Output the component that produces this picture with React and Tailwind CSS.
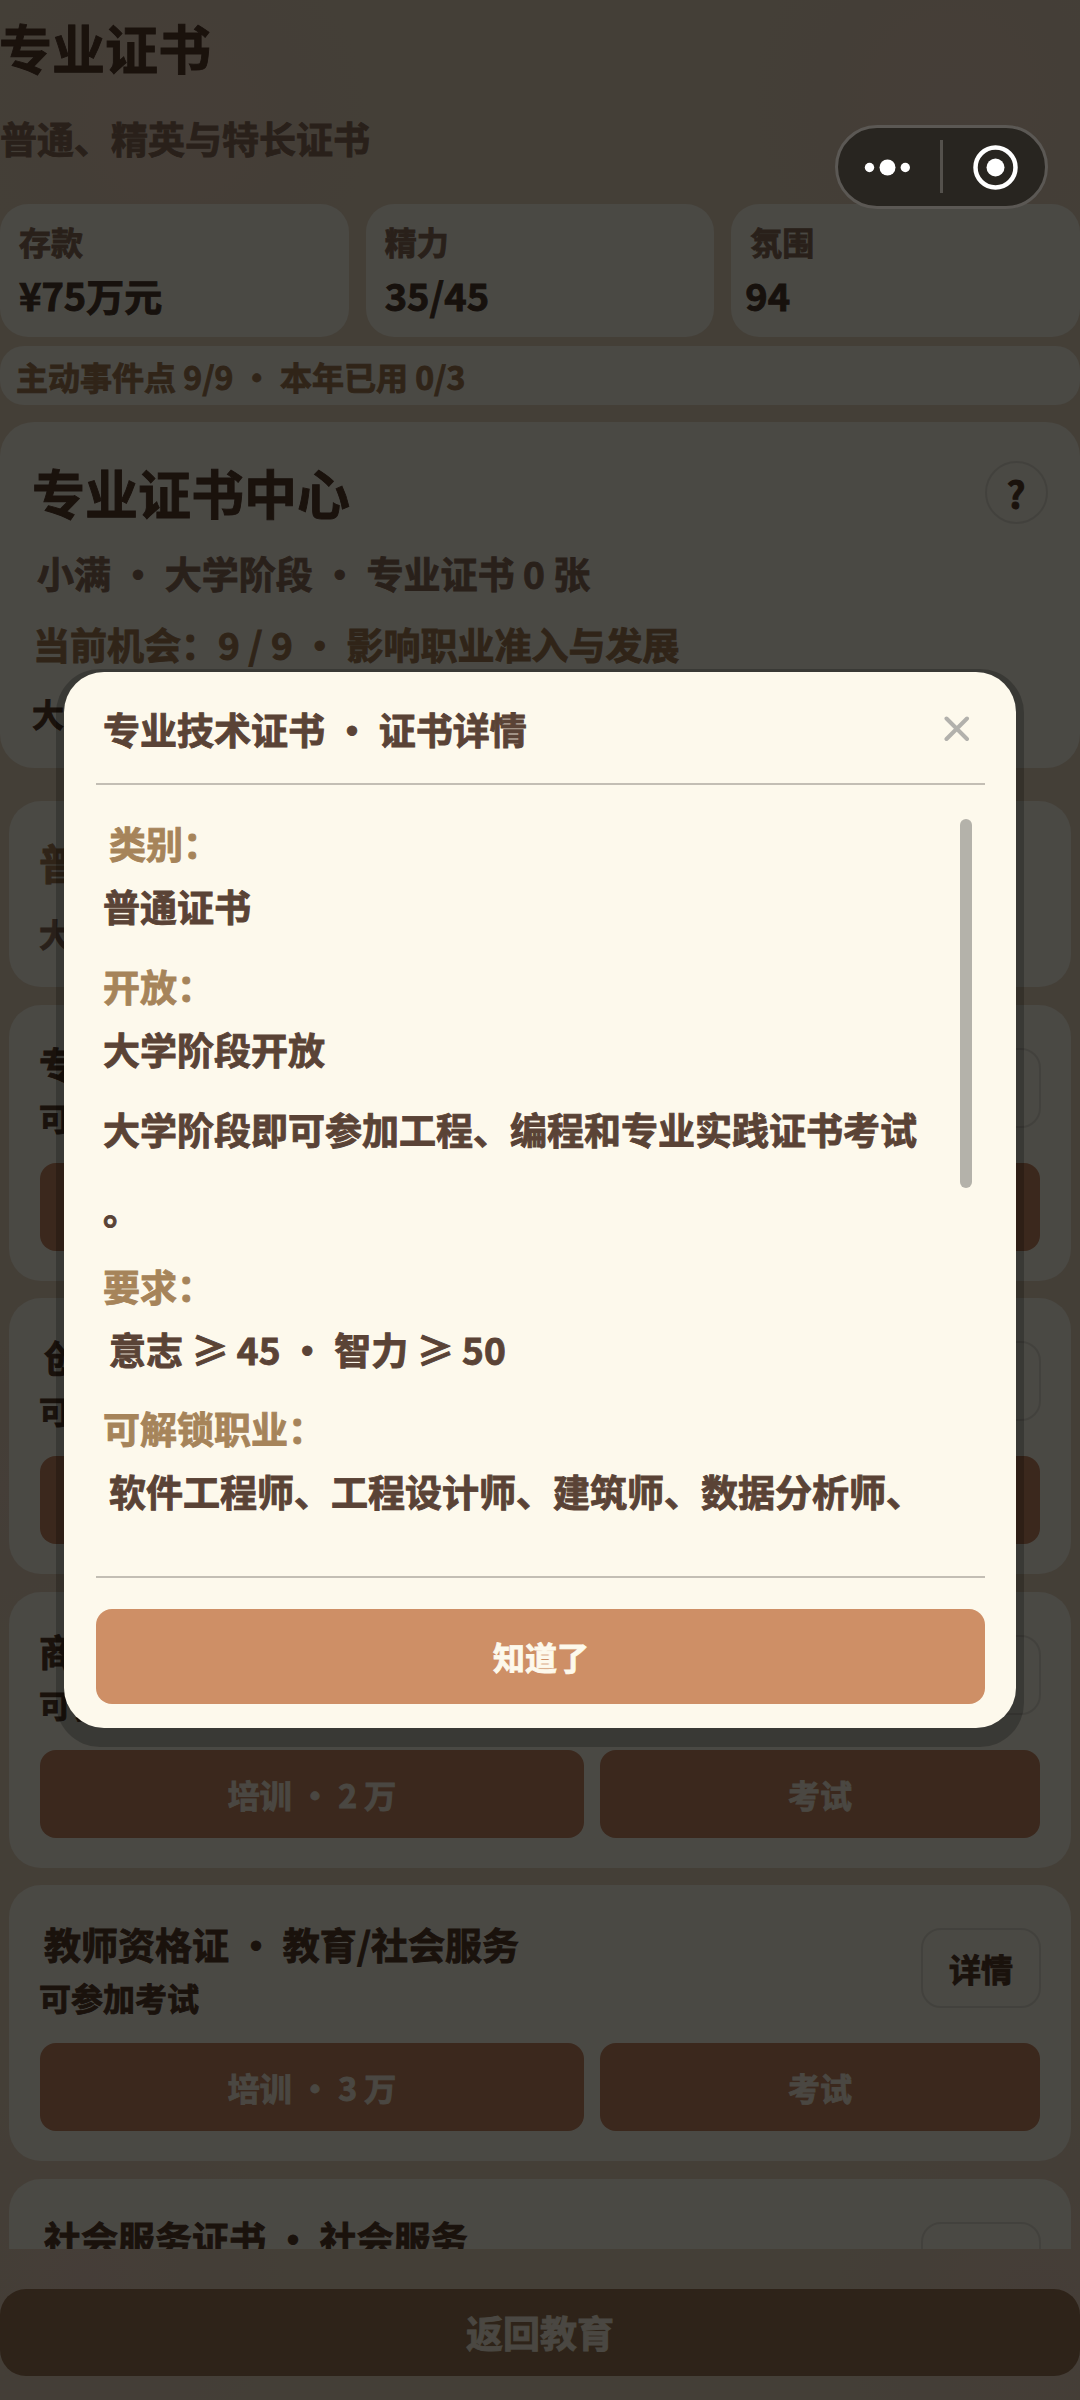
import React from 'react';

const certificates = [
    { title: '专业技术证书 · 专业技术', status: '可参加考试', cost: 3, action: '详情' },
    { title: '创业管理证书 · 创业/管理', status: '可参加考试', cost: 3, action: '详情', indent: true },
    { title: '商务管理证书 · 商务', status: '可参加考试', cost: 2, action: '详情' },
    { title: '教师资格证 · 教育/社会服务', status: '可参加考试', cost: 3, action: '详情', indent: true },
    { title: '社会服务证书 · 社会服务', status: '可参加考试', cost: 2, indent: true },
];

const stats = [
    { label: '存款', value: '¥75万元' },
    { label: '精力', value: '35/45' },
    { label: '氛围', value: '94', shift: true },
];

const CertificateCard = ({ title, status, cost, action, indent }) => (
    <div className="h-[276px] shrink-0 rounded-[32px] bg-[#f7f3e3] px-[31px] pt-[29px]">
        <div className="flex justify-between">
            <div>
                <h3 className={`text-[37px] leading-[60px] ${indent ? 'pl-[4px]' : '-ml-px'}`}>{title}</h3>
                <p className="-ml-px text-[32px] leading-[46px]">{status}</p>
            </div>
            <button className="-mr-px mt-[14px] h-[80px] w-[120px] rounded-[20px] border-2 border-[#dedbcb] text-[32px] font-bold">
                {action}
            </button>
        </div>
        <div className="mt-[23px] flex gap-4 text-[32px] text-[#f7efdc]">
            <button className="h-[88px] w-[544px] rounded-[16px] bg-[#c58561] font-bold">培训 · {cost} 万</button>
            <button className="h-[88px] flex-1 rounded-[16px] bg-[#c58561] font-bold">考试</button>
        </div>
    </div>
);

const Detail = ({ label, children, className = '', labelClass = '', valueClass = '' }) => (
    <div className={`leading-[62px] ${className}`}>
        <div className={`text-[#a6845a] ${labelClass}`}>{label}：</div>
        <div className={`mt-px whitespace-nowrap ${valueClass}`}>{children}</div>
    </div>
);

const DetailDialog = () => (
    <div className="absolute left-[56px] top-[669px] w-[968px] rounded-[44px] bg-black/22 px-2 pb-[19px] pt-[3px]">
        <div className="flex h-[1056px] flex-col rounded-[40px] bg-[#fdf9ec] px-[31.500px] text-[37px] text-[#5a4336]">
            <div className="flex h-[113px] items-center justify-between border-b-2 border-[#c3beb4] pl-[7.500px] pr-[15px]">
                <h2 className="pt-[4px]">专业技术证书 · 证书详情</h2>
                <svg className="mt-[2px]" width="26" height="26" viewBox="0 0 26 26" fill="none" stroke="#b2b1ac" strokeWidth="4" strokeLinecap="round">
                    <path d="M2.500 2.500L23 23M23 2.500L2.500 23" />
                </svg>
            </div>

            <div className="relative h-[791px] overflow-hidden pl-[7.500px] pt-[27px]">
                <Detail label="类别" labelClass="pl-[6px]">普通证书</Detail>
                <Detail label="开放" className="mt-[18px]">大学阶段开放</Detail>
                <p className="mt-[9px] w-[820px] leading-[80px] [line-break:anywhere]">
                    大学阶段即可参加工程、编程和专业实践证书考试。
                </p>
                <Detail label="要求" className="mt-[6px]" valueClass="pl-[6px]">意志 ≥ 45 · 智力 ≥ 50</Detail>
                <Detail label="可解锁职业" className="mt-[17px]" valueClass="pl-[6px]">
                    软件工程师、工程设计师、建筑师、数据分析师、
                </Detail>
                <div className="absolute right-[12.500px] top-[34px] h-[369px] w-[12px] rounded-full bg-[#b4b2aa]"></div>
            </div>

            <div className="border-t-2 border-[#c3beb4] pt-[31px]">
                <button className="h-[95px] w-full rounded-[16px] bg-[#ce8f66] pb-[2px] pl-[2px] text-[32px] font-bold text-[#fdf9ec]">
                    知道了
                </button>
            </div>
        </div>
    </div>
);

// Mini program menu capsule
const Capsule = () => (
    <div className="absolute left-[835px] top-[125px] flex h-[84px] w-[213px] items-center rounded-full border-[3px] border-[#5b5854] bg-[#282520]">
        <svg width="207" height="78" viewBox="0 0 207 78" fill="#fff">
            <circle cx="31.500" cy="39.500" r="4.700" />
            <circle cx="49.500" cy="39.500" r="8" />
            <circle cx="67.300" cy="39.500" r="4.700" />
            <rect x="102" y="12" width="3" height="53" fill="#54514c" />
            <circle cx="157.500" cy="39.500" r="20" fill="none" stroke="#fff" strokeWidth="4.500" />
            <circle cx="157.500" cy="39.500" r="9" />
        </svg>
    </div>
);

const App = () => {
    return (
        <div className="relative flex h-[2400px] w-[1080px] flex-col overflow-hidden bg-[#e3d2b9] font-['Noto_Sans_CJK_SC',sans-serif] font-bold text-[#573c2b] [-webkit-text-stroke:0.9px]">
            {/* Warm blotches of the paper backdrop */}
            <div className="absolute inset-0 bg-[radial-gradient(circle_at_16%_5%,#e8cfbb_0,transparent_8%),radial-gradient(circle_at_88%_4%,#e8cfbb_0,transparent_8%),radial-gradient(circle_at_0%_62%,#e6cfbb_0,transparent_8%),radial-gradient(circle_at_96%_96%,#e8cebb_0,transparent_8%),radial-gradient(circle_at_8%_95%,#e7cebb_0,transparent_8%)]"></div>

            <div className="relative flex min-h-0 flex-1 flex-col overflow-hidden">
                <h1 className="-ml-px text-[53px] leading-[94px]">专业证书</h1>
                <p className="text-[37px] leading-[88px] text-[#8a6d58]">普通、精英与特长证书</p>

                <div className="mt-[22px] flex shrink-0 gap-[17px]">
                    {stats.map((s) => (
                        <div key={s.label} className="h-[133px] flex-1 rounded-[28px] bg-[#f7f3e3] pl-[19px] pt-[10px]">
                            <div className="text-[32px] leading-[54px] text-[#8a6d58]">{s.label}</div>
                            <div className={`text-[38px] leading-[54px] text-[#4d3a2c] ${s.shift ? '-ml-[5px]' : ''}`}>{s.value}</div>
                        </div>
                    ))}
                </div>

                <div className="mt-[9px] h-[59px] shrink-0 rounded-[24px] bg-[#f7f3e3] pl-[16px] text-[32px] leading-[60px] text-[#a07a52]">
                    主动事件点 9/9 · 本年已用 0/3
                </div>

                <div className="mt-[17px] h-[346px] shrink-0 rounded-[34px] bg-[#f7f3e3] pl-[32px] pr-[32px] pt-[32px]">
                    <div className="flex justify-between">
                        <h2 className="text-[53px] leading-[76px]">专业证书中心</h2>
                        <button className="mt-[7px] h-[63px] w-[63px] rounded-full border-2 border-[#dedbcb] pr-px text-[37px] font-bold leading-[56px]">?</button>
                    </div>
                    <p className="mt-[7px] pl-[5px] text-[37px] leading-[72px] text-[#8a6d58]">小满 · 大学阶段 · 专业证书 0 张</p>
                    <p className="pl-px text-[37px] leading-[70px] text-[#a07a52]">当前机会：9 / 9 · 影响职业准入与发展</p>
                    <p className="text-[32px] leading-[68px]">大学阶段开放专业证书考试</p>
                </div>

                <div className="mt-[33px] flex flex-col gap-[17.500px] px-[9px]">
                    <div className="h-[186px] shrink-0 rounded-[32px] bg-[#f7f3e3] px-[30px] pt-[26px]">
                        <h3 className="text-[42px] leading-[70px] text-[#a07a52]">普通证书</h3>
                        <p className="text-[32px] leading-[72px] text-[#8a6d58]">大学阶段可参加</p>
                    </div>
                    {certificates.map((c) => (
                        <CertificateCard key={c.title} {...c} />
                    ))}
                </div>
            </div>

            <div className="relative h-[151px] shrink-0 pt-[40px]">
                <button className="h-[87px] w-full rounded-[26px] bg-[#9b7654] text-[37px] font-bold text-[#f7efdc]">返回教育</button>
            </div>

            <div className="absolute inset-0 bg-black/70"></div>
            <DetailDialog />
            <Capsule />
        </div>
    );
};

export default App;
